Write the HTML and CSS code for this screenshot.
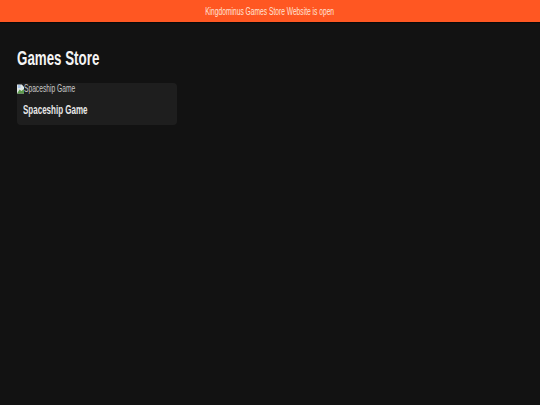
FILE: index.html
```html
<!DOCTYPE html>
<html lang="en">
<head>
  <meta charset="UTF-8" />
  <meta name="viewport" content="width=device-width, initial-scale=1.0"/>
  <title>Games Store</title>
  <link rel="stylesheet" href="styles.css">
</head>
<body>
  <div class="banner"><span>Kingdominus Games Store Website is open</span></div>

  <div class="store">
    <h1><span>Games Store</span></h1>

    <div class="game-grid">
      <div class="game-card">
        <div class="game-thumb">
          <svg class="broken-icon" viewBox="0 0 8 10" width="7" height="10" preserveAspectRatio="none" aria-hidden="true">
            <path d="M0 0.5H5.5L8 3V9.5H0Z" fill="#dfe6e4"/>
            <path d="M0 9.5L3 5.5L5 7L8 5V9.5Z" fill="#5d9a4c"/>
            <path d="M1 1H4V4H1Z" fill="#a9c4ea"/>
          </svg>
          <span>Spaceship Game</span>
        </div>
        <h2><span>Spaceship Game</span></h2>
      </div>
    </div>
  </div>
</body>
</html>
```

FILE: styles.css
```css
body {
  font-family: "Liberation Sans", Arial, sans-serif;
  background: #121212;
  color: #fff;
  margin: 0;
  min-height: 100vh;
}

/* the text in this layout runs narrow, so every label gets squeezed */
.banner span,
h1 span,
h2 span,
.game-thumb span {
  display: inline-block;
  white-space: nowrap;
  transform: scaleX(0.667);
  transform-origin: left center;
}

.banner {
  background: #ff5722;
  color: #ffe3d6;
  height: 22px;
  line-height: 23px;
  text-align: center;
  font-size: 10px;
  box-shadow: 0 1px 1px rgba(0,0,0,0.4);
}

.banner span {
  transform-origin: center;
}

.store {
  padding: 0 17px;
}

h1 {
  font-size: 20px;
  line-height: 23px;
  font-weight: bold;
  color: #f4f4f4;
  margin: 0;
  padding-top: 25px;
  padding-bottom: 13px;
}

.game-grid {
  display: grid;
  grid-template-columns: 160px;
}

.game-card {
  background: #1e1e1e;
  border-radius: 4px;
  height: 42px;
}

.game-thumb {
  display: flex;
  align-items: center;
  height: 11px;
  font-size: 10px;
  color: #c8c8c8;
}

.broken-icon {
  flex-shrink: 0;
}

h2 {
  font-size: 12px;
  line-height: 14px;
  font-weight: bold;
  color: #e8e8e8;
  margin: 0;
  padding: 9px 6px 0;
}
```
